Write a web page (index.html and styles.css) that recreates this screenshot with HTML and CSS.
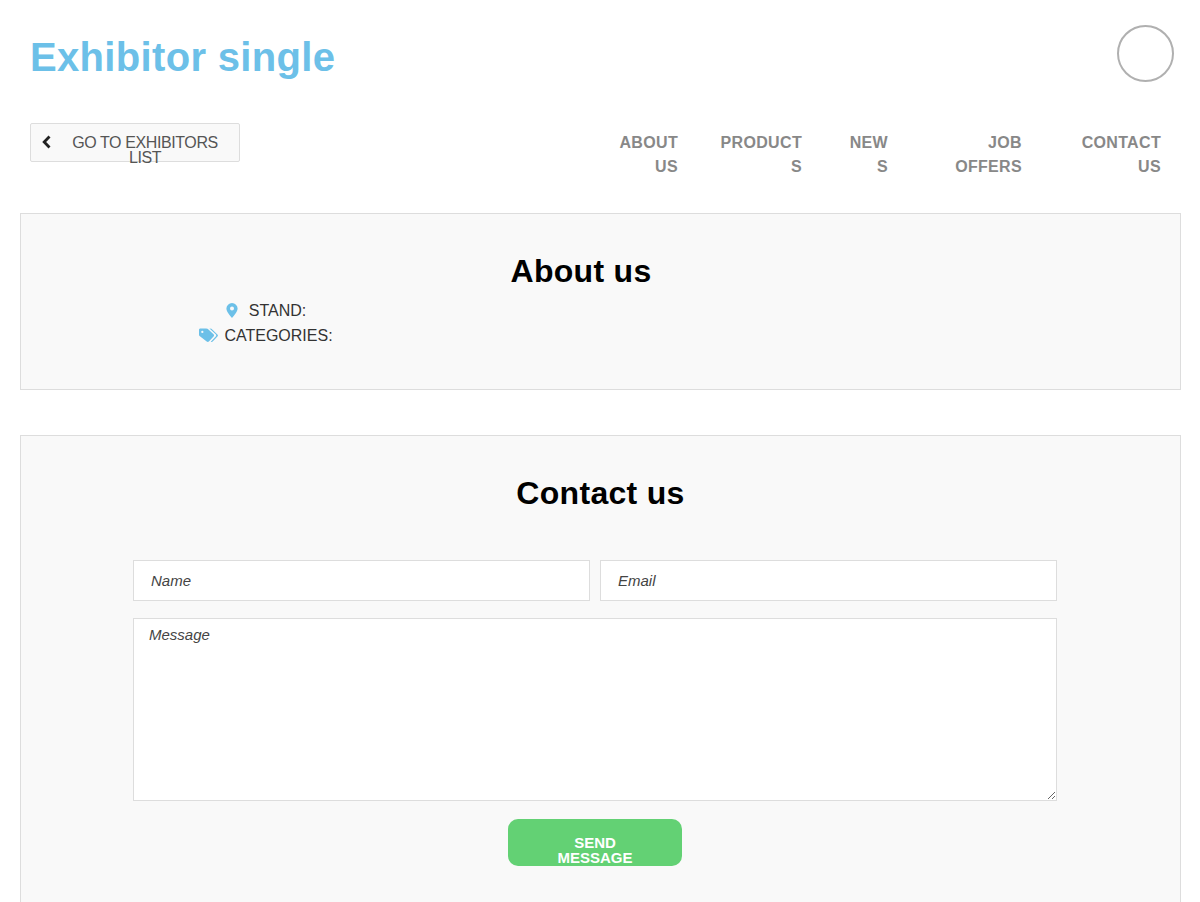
FILE: index.html
```html
<!DOCTYPE html>
<html lang="en">
<head>
<meta charset="utf-8">
<title>Exhibitor single</title>
<link rel="stylesheet" href="styles.css">
</head>
<body>
<header class="top">
  <h1 class="page-title">Exhibitor single</h1>
  <div class="avatar"></div>
</header>
<div class="toolbar">
  <a class="back" href="#">
    <svg class="back-icon" width="9" height="14" viewBox="0 0 9 14"><path d="M7.500 1.500 2.200 7l5.300 5.500" fill="none" stroke="#222" stroke-width="2.800"/></svg>
    <span class="back-label">GO TO EXHIBITORS LIST</span>
  </a>
  <nav class="nav">
    <a class="nav-item nav-about" href="#">ABOUT US</a>
    <a class="nav-item nav-products" href="#">PRODUCTS</a>
    <a class="nav-item nav-news" href="#">NEWS</a>
    <a class="nav-item nav-jobs" href="#">JOB OFFERS</a>
    <a class="nav-item nav-contact" href="#">CONTACT US</a>
  </nav>
</div>
<section class="card card-about">
  <h2 class="card-title title-about">About us</h2>
  <div class="info">
    <div class="info-row">
      <svg class="pin" width="12" height="15" viewBox="0 0 12 15"><path fill-rule="evenodd" fill="#6cc0e8" d="M6 0a5.600 5.600 0 0 1 5.600 5.600C11.600 9 8 12.600 6 15 4 12.600.4 9 .4 5.600A5.600 5.600 0 0 1 6 0Zm0 3.600a2 2 0 1 0 0 4 2 2 0 0 0 0-4Z"/></svg>
      <span>STAND:</span>
    </div>
    <div class="info-row">
      <svg class="tags" width="19" height="15" viewBox="0 0 20 15"><path fill-rule="evenodd" fill="#6cc0e8" d="M0 1.500C0 .6.600 0 1.500 0h6.300c.5 0 .9.200 1.300.5l6.200 5.800c.7.700.7 1.600 0 2.300l-4.900 5.300c-.7.700-1.700.700-2.300 0L.6 8C.2 7.600 0 7.200 0 6.700Zm3.500 1a1.200 1.200 0 1 0 0 2.400 1.200 1.200 0 0 0 0-2.400Z"/><path fill="#6cc0e8" d="M11 0h.8c.5 0 .9.200 1.300.5l6.300 5.900c.7.700.7 1.500 0 2.200l-5 5.300c-.6.600-1.400.700-2 .1l5.200-5.500c.7-.7.700-1.500 0-2.200Z"/></svg>
      <span>CATEGORIES:</span>
    </div>
  </div>
</section>
<section class="card card-contact">
  <h2 class="card-title">Contact us</h2>
  <form class="form">
    <div class="form-row">
      <input class="field" type="text" placeholder="Name">
      <input class="field" type="email" placeholder="Email">
    </div>
    <textarea class="message" placeholder="Message"></textarea>
    <button class="send" type="button">SEND MESSAGE</button>
  </form>
</section>
</body>
</html>
```
FILE: styles.css
```css
* { box-sizing: border-box; }
html, body { margin: 0; height: 902px; overflow: hidden; }
body { background: #fff; font-family: "Liberation Sans", Arial, sans-serif; color: #333; }
.top { display: flex; justify-content: space-between; align-items: flex-start; padding: 25px 26px 0 30px; height: 123px; }
.page-title { margin: 9px 0 0; font-size: 40px; line-height: 46px; font-weight: 700; letter-spacing: .33px; color: #6cc0e8; }
.avatar { width: 57px; height: 57px; border: 2px solid #b0b0b0; border-radius: 50%; background: #fff; }
.toolbar { display: flex; justify-content: space-between; align-items: flex-start; padding: 0 39px 0 30px; height: 90px; }
.back { display: flex; width: 210px; height: 39px; padding: 0 21px 0 11px; border: 1px solid #ddd; border-radius: 2px; background: #f9f9f9; color: #555; text-decoration: none; font-size: 16px; line-height: 15px; }
.back-icon { flex: none; margin-top: 11px; }
.back-label { flex: 1; margin-left: 21px; padding-top: 11px; text-align: center; letter-spacing: -.4px; }
.nav { display: flex; padding-top: 8px; }
.nav-item { display: block; text-align: right; overflow-wrap: anywhere; color: #888; text-decoration: none; font-size: 16px; line-height: 24px; font-weight: 700; letter-spacing: .33px; }
.nav-about { width: 60px; }
.nav-products { width: 82px; margin-left: 42px; }
.nav-news { width: 40px; margin-left: 46px; }
.nav-jobs { width: 70px; margin-left: 64px; }
.nav-contact { width: 82px; margin-left: 57px; }
.card { margin: 0 19px 0 20px; border: 1px solid #ddd; background: #f9f9f9; }
.card-about { height: 177px; padding-top: 39px; }
.card-contact { margin-top: 45px; height: 520px; padding-top: 39px; }
.card-title { margin: 0; font-size: 32px; line-height: 37px; font-weight: 700; letter-spacing: .3px; color: #000; text-align: center; }
.title-about { padding-right: 39px; }
.info { width: 490px; margin-top: 8px; font-size: 16px; line-height: 25px; color: #333; }
.info-row { display: flex; justify-content: center; align-items: center; }
.pin { margin-right: 11px; }
.tags { margin-right: 6px; }
.form { display: flex; flex-direction: column; width: 924px; margin: 48px 0 0 112px; }
.form-row { display: flex; gap: 10px; }
.field { width: 457px; height: 41px; padding: 0 17px; border: 1px solid #ddd; background: #fff; font: italic 15px "Liberation Sans", Arial, sans-serif; color: #444; outline: none; }
.message { width: 924px; height: 183px; margin-top: 17px; padding: 8px 15px; border: 1px solid #ddd; background: #fff; font: italic 15px/16px "Liberation Sans", Arial, sans-serif; color: #444; outline: none; }
.field::placeholder, .message::placeholder { color: #444; opacity: 1; }
.send { align-self: center; width: 174px; height: 47px; margin-top: 18px; padding: 15px 30px 0; border: 0; border-radius: 10px; background: #63d174; color: #fff; font: 700 15px/15px "Liberation Sans", Arial, sans-serif; text-align: center; display: block; }
```
